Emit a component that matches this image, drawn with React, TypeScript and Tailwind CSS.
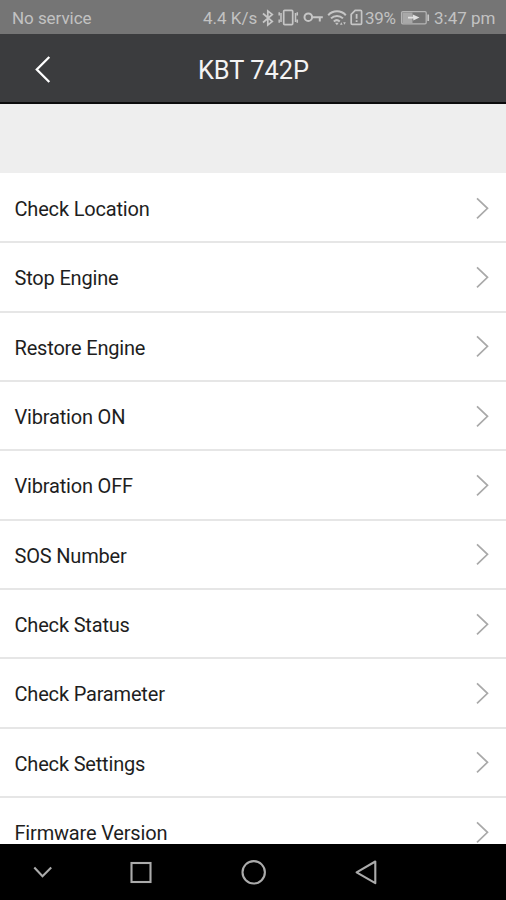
import type { ReactNode } from "react";

const commands: string[] = [
  "Check Location",
  "Stop Engine",
  "Restore Engine",
  "Vibration ON",
  "Vibration OFF",
  "SOS Number",
  "Check Status",
  "Check Parameter",
  "Check Settings",
  "Firmware Version",
];

function StatusIcons() {
  return (
    <svg width="104" height="34" viewBox="260 0 104 34" fill="none" stroke="#c6c6c6" strokeWidth="1.7" className="shrink-0">
      {/* bluetooth */}
      <path d="M263 13.5l9.3 8-4.5 3.6V10.9l4.5 3.6-9.3 8" strokeWidth="1.7" />
      {/* vibrate */}
      <rect x="283.7" y="10.4" width="9" height="14.2" rx="1" />
      <path d="M281 13v9M279.2 12.3v3.2M279.2 19.5v3.2M295.5 13v9M297.3 12.3v3.2M297.3 19.5v3.2" strokeWidth="1.5" />
      {/* key */}
      <circle cx="308.3" cy="17.2" r="3.8" strokeWidth="2" />
      <path d="M312 17.2h10.8M319.8 17.2v4.3" strokeWidth="2" />
      {/* wifi */}
      <path d="M328.2 15.2a12 12 0 0 1 17.6 0M331 18.4a8.4 8.4 0 0 1 12 0M333.8 21.4a4.6 4.6 0 0 1 6 0" strokeWidth="2" />
      <path d="M335 22.8h3.8l-1.9 2.4zM340 24.8l1.3-2.6 1.3 2.6zM343.2 22.2h2.6l-1.3 2.6z" fill="#c6c6c6" stroke="none" />
      {/* sim card alert */}
      <path d="M355.2 10.4h5.2q1.2 0 1.2 1.2v11.6q0 1.2-1.2 1.2h-8q-1.2 0-1.2-1.2V14.4z" />
      <path d="M356.6 14v4.8M356.6 20.3v1.8" strokeWidth="1.8" />
    </svg>
  );
}

function BatteryIcon() {
  return (
    <svg width="30" height="34" viewBox="400 0 30 34" fill="none" className="shrink-0">
      <rect x="401.6" y="11.6" width="24.6" height="12.2" rx="1.2" stroke="#b5b5b5" strokeWidth="1.3" />
      <rect x="402.5" y="12.5" width="10" height="10.5" fill="#a8a8a8" />
      <path d="M408 16.8h4.8v-2.3l6.7 3-6.2 3v-2h-5.3z" fill="#e0e0e0" />
      <path d="M428.2 14.5v6.5" stroke="#c6c6c6" strokeWidth="1.7" />
    </svg>
  );
}

function StatusBar() {
  return (
    <div className="flex h-[34px] shrink-0 items-center bg-[#757575] text-[17px] leading-[34px] text-[#c2c2c2] whitespace-nowrap">
      <span className="ml-3 w-[191px] pt-[2px] tracking-[-0.05px]">No service</span>
      <span className="w-[57px] pt-[2px]">4.4 K/s</span>
      <StatusIcons />
      <span className="w-[36px] pl-px pt-[2px] tracking-[-0.3px]">39%</span>
      <BatteryIcon />
      <span className="ml-[4px] pt-[2px]">3:47 pm</span>
    </div>
  );
}

function Header() {
  return (
    <header className="grid h-[70px] shrink-0 grid-cols-[86px_1fr_86px] items-center border-b-2 border-[#0b0b0c] bg-[#3b3c3e]">
      <svg width="86" height="68" viewBox="0 0 86 68" fill="none" stroke="#fff" strokeWidth="2.3">
        <path d="M49.3 23L36.8 35.5 49.3 48" />
      </svg>
      <h1 className="pt-[4px] pl-px text-center text-[25.4px] leading-7 text-[#f3f3f3]">KBT 742P</h1>
    </header>
  );
}

function Row({ children }: { children: ReactNode }) {
  return (
    <li className="flex h-[69.35px] shrink-0 items-center justify-between border-b-2 border-[#e6e6e6] pr-[16px] pl-[14.5px]">
      <span className="pt-[2.5px] text-[20px] leading-6 tracking-[-0.18px] text-[#1e1e1e]">{children}</span>
      <svg width="16" height="26" viewBox="0 0 16 26" fill="none" stroke="#a9a9a9" strokeWidth="1.7">
        <path d="M3 3.3L13.5 13.3 3 23.3" />
      </svg>
    </li>
  );
}

function NavigationBar() {
  return (
    <nav className="h-14 shrink-0 bg-black">
      <svg width="506" height="56" viewBox="0 844 506 56" fill="none" stroke="#ababab" strokeWidth="2.1">
        <path d="M34.3 867.5l8.2 8.7 8.7-8.7" />
        <rect x="131.5" y="863" width="19" height="19" />
        <circle cx="253.7" cy="872.3" r="11.2" />
        <path d="M375.3 861.5v21.7l-18.7-10.8z" strokeLinejoin="round" />
      </svg>
    </nav>
  );
}

export default function App() {
  return (
    <div className="flex h-[900px] w-[506px] flex-col overflow-hidden bg-white font-[Roboto,sans-serif]">
      <StatusBar />
      <Header />
      <main className="flex min-h-0 flex-1 flex-col overflow-hidden">
        <div className="h-[69px] shrink-0 bg-[#eeeeee]" />
        <ul className="flex flex-col pt-px">
          {commands.map((command) => (
            <Row key={command}>{command}</Row>
          ))}
        </ul>
      </main>
      <NavigationBar />
    </div>
  );
}
